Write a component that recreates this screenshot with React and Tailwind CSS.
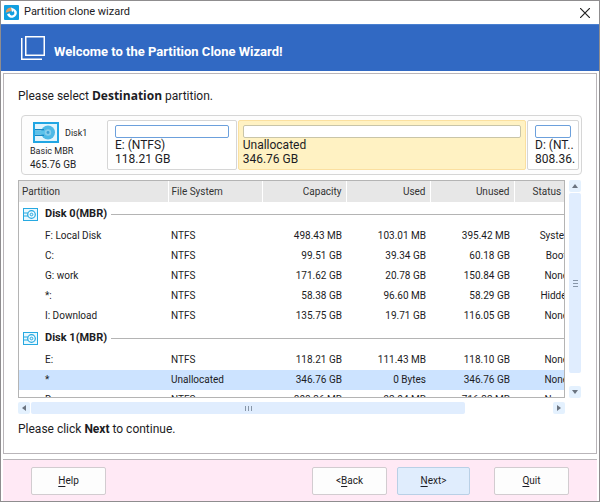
const disks = [
  {
    name: 'Disk 0(MBR)',
    partitions: [
      { name: 'F: Local Disk', fs: 'NTFS', capacity: '498.43 MB', used: '103.01 MB', unused: '395.42 MB', status: 'System' },
      { name: 'C:', fs: 'NTFS', capacity: '99.51 GB', used: '39.34 GB', unused: '60.18 GB', status: 'Boot' },
      { name: 'G: work', fs: 'NTFS', capacity: '171.62 GB', used: '20.78 GB', unused: '150.84 GB', status: 'None' },
      { name: '*:', fs: 'NTFS', capacity: '58.38 GB', used: '96.60 MB', unused: '58.29 GB', status: 'Hidden' },
      { name: 'I: Download', fs: 'NTFS', capacity: '135.75 GB', used: '19.71 GB', unused: '116.05 GB', status: 'None' },
    ],
  },
  {
    name: 'Disk 1(MBR)',
    partitions: [
      { name: 'E:', fs: 'NTFS', capacity: '118.21 GB', used: '111.43 MB', unused: '118.10 GB', status: 'None' },
      { name: '*', fs: 'Unallocated', capacity: '346.76 GB', used: '0 Bytes', unused: '346.76 GB', status: 'None', selected: true },
      { name: 'D:', fs: 'NTFS', capacity: '808.36 MB', used: '92.04 MB', unused: '716.32 MB', status: 'None' },
    ],
  },
]

const blocks = [
  { label: 'E: (NTFS)', size: '118.21 GB' },
  { label: 'Unallocated', size: '346.76 GB', selected: true },
  { label: 'D: (NT..', size: '808.36.' },
]

function AppIcon() {
  return (
    <svg width="15" height="15" viewBox="0 0 15 15">
      <rect width="15" height="15" rx="1" fill="#129fe0" />
      <path d="M12.6 6.2a5 5 0 1 1-9.6 3l2.6-.9a2.4 2.4 0 1 0 3.6-2.3l1.6-1.8z" fill="#fff" />
      <path d="M1.8 7.8C1.8 4.8 4 2.6 7.4 2.6v3.6C5.4 6.2 4 6.8 1.8 7.8z" fill="#e09a62" />
      <path d="M7 2.6l4 1.6L8 7.2z" fill="#fff" />
    </svg>
  )
}

function CopyIcon() {
  return (
    <svg width="24" height="24" viewBox="0 0 24 24" fill="none" stroke="#fff" strokeWidth="1.5">
      <rect x="4.75" y="0.75" width="18.5" height="18.5" />
      <path d="M0.75 2v21.25H21" />
    </svg>
  )
}

function DriveIcon() {
  return (
    <svg width="26" height="21" viewBox="0 0 26 21">
      <rect x="1" y="1" width="24" height="19" fill="#e2f5fd" stroke="#21a6e3" strokeWidth="2" />
      <circle cx="15" cy="10.5" r="7" fill="#4db9e6" />
      <path d="M2 7h9v1.6H2zM2 12.4h9V14H2z" fill="#1787c4" />
      <path d="M2 8.6h11v3.8H2z" fill="#5cc2ea" />
      <circle cx="15" cy="10.5" r="3.2" fill="#86cdec" />
      <circle cx="15" cy="10.5" r="1.4" fill="#3a9fd4" />
    </svg>
  )
}

function SmallDriveIcon() {
  return (
    <svg width="15" height="13" viewBox="0 0 15 13" fill="none" stroke="#27a9e1">
      <rect x="0.5" y="0.5" width="14" height="12" fill="#e9f8fe" />
      <circle cx="8.5" cy="6.5" r="3.8" strokeWidth="1.2" />
      <circle cx="8.5" cy="6.5" r="1.3" />
      <path d="M1 5h4M1 8h4" />
    </svg>
  )
}

function ScrollArrow({ label, d }) {
  return (
    <button aria-label={label} className="flex size-3 shrink-0 items-center justify-center rounded-xs bg-[#e4f1fe]">
      <svg width="6" height="6" viewBox="0 0 6 6" fill="#6b7480">
        <path d={d} />
      </svg>
    </button>
  )
}

function PartitionBlock({ label, size, selected }) {
  return (
    <button
      className={`flex min-w-0 flex-col overflow-hidden rounded-xs border pt-1 text-left text-xs leading-[14px] ${
        selected ? 'border-[#fbe0a0] bg-[#fff2c3] pl-1' : 'border-[#d6d6d6] bg-white pl-[7px]'
      }`}
    >
      <span
        className={`block h-[13px] shrink-0 self-stretch rounded-xs border bg-white ${
          selected ? 'mr-1 border-[#c9c5a8]' : 'mr-[7px] border-[#6ca0dc]'
        }`}
      />
      <span className="whitespace-nowrap">{label}</span>
      <span className="whitespace-nowrap">{size}</span>
    </button>
  )
}

function WizardButton({ before = '', hotkey, rest, primary }) {
  return (
    <button
      className={`h-7 rounded-xs border text-[10px] ${
        primary ? 'w-[73px] border-[#b9d0e6] bg-[#e0edfd]' : 'w-[75px] border-[#d2ccd0] bg-[#fdfdfd]'
      }`}
    >
      {before}
      <span className="underline underline-offset-2">{hotkey}</span>
      {rest}
    </button>
  )
}

function DiskRows({ disk }) {
  return (
    <tbody>
      <tr className="h-6">
        <th colSpan={6} className="p-0 pl-1 text-left text-[11px] font-bold">
          <div className="flex items-center">
            <SmallDriveIcon />
            <span className="ml-[7px] mr-1">{disk.name}</span>
            <span className="h-px flex-1 bg-[#b4b4b4]" />
          </div>
        </th>
      </tr>
      {disk.partitions.map((p) => (
        <tr key={p.name} className={`h-5 ${p.selected ? 'bg-[#cce3ff]' : ''}`}>
          <td className="p-0 pl-[26px]">{p.name}</td>
          <td className="p-0 pl-[3px]">{p.fs}</td>
          <td className="p-0 pr-1 text-right">{p.capacity}</td>
          <td className="p-0 pr-1 text-right">{p.used}</td>
          <td className="p-0 pr-1 text-right">{p.unused}</td>
          <td className="p-0 text-center">{p.status}</td>
        </tr>
      ))}
    </tbody>
  )
}

function PartitionTable() {
  return (
    <div className="min-h-0 min-w-0 overflow-hidden border border-[#b4b4b4]">
      <table className="w-[580px] table-fixed border-collapse text-[10px] leading-3">
        <colgroup>
          <col className="w-[149px]" />
          <col className="w-[94px]" />
          <col className="w-[84px]" />
          <col className="w-[84px]" />
          <col className="w-[84px]" />
          <col />
        </colgroup>
        <thead>
          <tr className="h-[21px] bg-[#e7e7e7] text-[#333] *:border-r *:border-white *:p-0 *:font-normal">
            <th className="pl-[3px]! text-left">Partition</th>
            <th className="pl-[3px]! text-left">File System</th>
            <th className="pr-1! text-right">Capacity</th>
            <th className="pr-1! text-right">Used</th>
            <th className="pr-1! text-right">Unused</th>
            <th className="pl-[18px]! text-left">Status</th>
          </tr>
        </thead>
        {disks.map((disk) => (
          <DiskRows key={disk.name} disk={disk} />
        ))}
      </table>
    </div>
  )
}

export default function App() {
  return (
    <div className="flex h-screen flex-col border border-[#8f8d8f] bg-white font-[Roboto,sans-serif] text-[#1c1c24]">
      <header className="flex h-[23px] shrink-0 items-center gap-[5px] pl-[3px] pr-[9px]">
        <AppIcon />
        <h1 className="flex-1 text-[11px]">Partition clone wizard</h1>
        <button aria-label="Close">
          <svg width="10" height="10" viewBox="0 0 10 10" stroke="#222" strokeWidth="1.2">
            <path d="M0 0l10 10M10 0L0 10" />
          </svg>
        </button>
      </header>

      <div className="flex h-[47px] shrink-0 items-center gap-[9px] border-t border-[#4a80d0] bg-[#3169c3] pl-5 text-white">
        <CopyIcon />
        <h2 className="pt-2 text-[13px] leading-4 font-bold">Welcome to the Partition Clone Wizard!</h2>
      </div>

      <main className="mx-0.5 mt-0.5 flex min-h-0 flex-1 flex-col border border-[#b9b5b9] px-3.5 pb-4 text-xs">
        <p className="mt-3.5 leading-4">
          Please select <b className="font-['Open_Sans',sans-serif]">Destination</b> partition.
        </p>

        <section className="ml-[3px] mt-[11px] flex h-[60px] shrink-0 rounded-sm border border-[#d6d6d6] bg-[#fdfdfd] py-1 pr-0.5">
          <div className="w-[85px] shrink-0 pl-2 pt-0.5 text-[9px]">
            <div className="flex items-center gap-1.5 pl-[3px]">
              <DriveIcon />
              <span>Disk1</span>
            </div>
            <p className="mt-0.5 leading-3">Basic MBR</p>
            <p className="text-[10px] leading-4">465.76 GB</p>
          </div>
          <div className="grid flex-1 grid-cols-[130fr_289fr_52fr] gap-px">
            {blocks.map((block) => (
              <PartitionBlock key={block.label} {...block} />
            ))}
          </div>
        </section>

        <div className="mt-[5px] grid min-h-0 flex-1 grid-cols-[1fr_13px] grid-rows-[1fr_13px] gap-x-1 gap-y-1">
          <PartitionTable />
          <div className="flex min-h-0 flex-col gap-px">
            <ScrollArrow label="Scroll up" d="M0 5l3-4 3 4z" />
            <div className="mb-3 flex w-3 flex-1 items-center justify-center rounded-xs bg-[#e0edfe]">
              <svg width="5" height="8" stroke="#8796a8">
                <path d="M0 1.5h5M0 4.5h5M0 7.5h5" />
              </svg>
            </div>
            <ScrollArrow label="Scroll down" d="M0 1l3 4 3-4z" />
          </div>
          <div className="flex gap-px">
            <ScrollArrow label="Scroll left" d="M5 0L1 3l4 3z" />
            <div className="mr-[87px] flex h-3 flex-1 items-center justify-center rounded-xs bg-[#e0edfe]">
              <svg width="8" height="5" stroke="#8796a8">
                <path d="M1.5 0v5M4.5 0v5M7.5 0v5" />
              </svg>
            </div>
            <ScrollArrow label="Scroll right" d="M1 0l4 3-4 3z" />
          </div>
        </div>

        <p className="mt-1.5 leading-4">
          Please click <b>Next</b> to continue.
        </p>
      </main>

      <footer className="mx-0.5 mt-[5px] flex h-[42px] shrink-0 items-center border-t border-[#b9b5b9] bg-[#ffe9f5] px-7">
        <WizardButton hotkey="H" rest="elp" />
        <div className="ml-auto mr-6 flex gap-2.5">
          <WizardButton before="<" hotkey="B" rest="ack" />
          <WizardButton hotkey="N" rest="ext>" primary />
        </div>
        <WizardButton hotkey="Q" rest="uit" />
      </footer>
    </div>
  )
}
